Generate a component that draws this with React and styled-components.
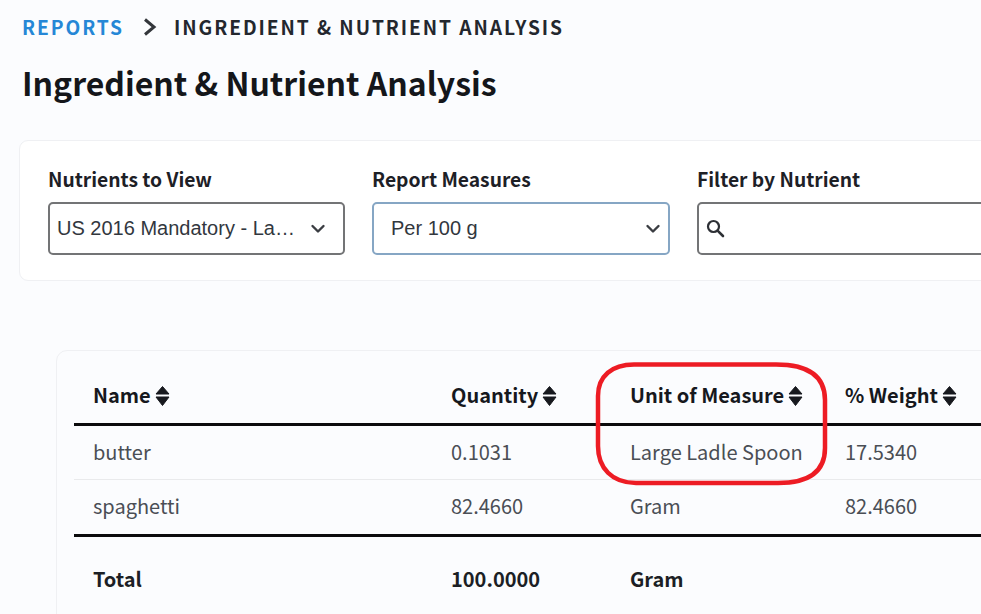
import React from 'react'
import styled, { createGlobalStyle } from 'styled-components'

const Global = createGlobalStyle`
  html, body {
    margin: 0;
    height: 100%;
    overflow: hidden;
    background: #fbfcfe;
  }
  body {
    font-family: "Noto Sans CJK SC", "Noto Sans", sans-serif;
    color: #16181d;
  }
`

const Page = styled.div`
  position: relative;
  width: 981px;
  height: 614px;
  overflow: hidden;
  padding: 15px 0 0 22px;
  box-sizing: border-box;
`

const Crumbs = styled.nav`
  display: flex;
  align-items: center;
  height: 24px;
  font-size: 19.2px;
  font-weight: 700;
  letter-spacing: 1.92px;
  white-space: nowrap;
`

const CrumbLink = styled.span`
  color: #2587d6;
`

const CrumbCurrent = styled.span`
  color: #23272e;
`

const Chevron = styled.svg`
  width: 14px;
  height: 18px;
  margin: 0 17px 0 19px;
`

const Title = styled.h1`
  margin: 21px 0 0;
  font-size: 32px;
  line-height: 44px;
  font-weight: 700;
  color: #14161a;
  white-space: nowrap;
`

const FilterCard = styled.section`
  display: flex;
  gap: 27px;
  width: 1100px;
  height: 141px;
  box-sizing: border-box;
  margin: 36px 0 0 -3px;
  padding: 25px 28px;
  background: #fff;
  border: 1.5px solid #eff0f3;
  border-radius: 9px;
`

const Field = styled.div`
  display: flex;
  flex-direction: column;
  gap: 10px;
  width: ${p => p.$width}px;
  flex: none;
`

const Label = styled.label`
  font-size: 19.25px;
  line-height: 26px;
  font-weight: 700;
  color: #1d2026;
  white-space: nowrap;
`

const Control = styled.div`
  display: flex;
  align-items: center;
  gap: 13px;
  height: 53px;
  box-sizing: border-box;
  padding: 0 ${p => p.$padRight || 17}px 0 ${p => p.$pad}px;
  background: #fff;
  border: ${p => (p.$focus ? '2px solid #86a6c4' : '2px solid #737476')};
  border-radius: 5px;
  font-family: "Liberation Sans", Arial, sans-serif;
  font-size: 20px;
  color: #32373e;
`

const ControlText = styled.span`
  flex: 1;
  min-width: 0;
  overflow: hidden;
  text-overflow: ellipsis;
  white-space: nowrap;
`

const Caret = styled.svg`
  width: 16px;
  height: 10px;
  flex: none;
`

const SearchIcon = styled.svg`
  width: 20px;
  height: 20px;
  flex: none;
  margin-top: -2px;
`

const TableCard = styled.section`
  width: 1100px;
  height: 320px;
  box-sizing: border-box;
  margin: 69px 0 0 34px;
  padding: 18px 17px 0;
  border: 1.5px solid #eff0f3;
  border-radius: 11px;
`

const Table = styled.table`
  width: 1060px;
  table-layout: fixed;
  border-collapse: collapse;
  font-size: 20px;
`

const Head = styled.th`
  height: 55px;
  padding: 0 0 2px 19px;
  box-sizing: border-box;
  text-align: left;
  font-weight: 700;
  color: #16181d;
  border-bottom: 3px solid #0b0b0c;
  white-space: nowrap;
`

const SortIcon = styled.svg`
  width: 15px;
  height: 20px;
  margin-left: 4px;
  vertical-align: -3px;
`

const Cell = styled.td`
  height: ${p => p.$height}px;
  padding: 0 0 2px 19px;
  box-sizing: border-box;
  color: #4a4e55;
  white-space: nowrap;
  border-bottom: ${p => (p.$last ? '3px solid #0b0b0c' : '1.5px solid #e9eaec')};
`

const TotalCell = styled.td`
  height: 84px;
  padding: 0 0 4px 19px;
  font-weight: 700;
  color: #1c1f25;
  white-space: nowrap;
`

const Callout = styled.svg`
  position: absolute;
  left: 590px;
  top: 356px;
  width: 244px;
  height: 134px;
  pointer-events: none;
`

const Sort = () => (
  <SortIcon viewBox="0 0 15 20">
    <path d="M7.5 0.5 L14 8 H1 Z M1 11 H14 L7.5 19.5 Z" fill="#17191e" strokeLinejoin="round" stroke="#17191e" />
  </SortIcon>
)

const Down = () => (
  <Caret viewBox="0 0 16 10">
    <path d="M2.5 2 L8 7.5 L13.5 2" fill="none" stroke="#3a3d42" strokeWidth="2.4" strokeLinecap="round" strokeLinejoin="round" />
  </Caret>
)

const rows = [
  { name: 'butter', qty: '0.1031', unit: 'Large Ladle Spoon', weight: '17.5340', height: 55 },
  { name: 'spaghetti', qty: '82.4660', unit: 'Gram', weight: '82.4660', height: 56, last: true }
]

const columns = ['Name', 'Quantity', 'Unit of Measure', '% Weight']

export default function App () {
  return (
    <Page>
      <Global />
      <Crumbs>
        <CrumbLink>REPORTS</CrumbLink>
        <Chevron viewBox="0 0 14 18">
          <path d="M2 1.5 L11 9 L2 16.5" fill="none" stroke="#33363b" strokeWidth="3" />
        </Chevron>
        <CrumbCurrent>INGREDIENT &amp; NUTRIENT ANALYSIS</CrumbCurrent>
      </Crumbs>
      <Title>Ingredient &amp; Nutrient Analysis</Title>

      <FilterCard>
        <Field $width={297}>
          <Label>Nutrients to View</Label>
          <Control $pad={7}>
            <ControlText>US 2016 Mandatory - Label Nutrients</ControlText>
            <Down />
          </Control>
        </Field>
        <Field $width={298}>
          <Label>Report Measures</Label>
          <Control $pad={17} $padRight={7} $focus>
            <ControlText>Per 100 g</ControlText>
            <Down />
          </Control>
        </Field>
        <Field $width={360}>
          <Label>Filter by Nutrient</Label>
          <Control $pad={6}>
            <SearchIcon viewBox="0 0 20 20">
              <circle cx="8.5" cy="8.5" r="5.5" fill="none" stroke="#2d3035" strokeWidth="2.2" />
              <path d="M12.8 12.8 L18 18" stroke="#2d3035" strokeWidth="2.6" strokeLinecap="round" />
            </SearchIcon>
          </Control>
        </Field>
      </FilterCard>

      <TableCard>
        <Table>
          <colgroup>
            <col style={{ width: 358 }} />
            <col style={{ width: 179 }} />
            <col style={{ width: 215 }} />
            <col />
          </colgroup>
          <thead>
            <tr>
              {columns.map(c => (
                <Head key={c}>{c}<Sort /></Head>
              ))}
            </tr>
          </thead>
          <tbody>
            {rows.map(r => (
              <tr key={r.name}>
                <Cell $height={r.height} $last={r.last}>{r.name}</Cell>
                <Cell $height={r.height} $last={r.last}>{r.qty}</Cell>
                <Cell $height={r.height} $last={r.last}>{r.unit}</Cell>
                <Cell $height={r.height} $last={r.last}>{r.weight}</Cell>
              </tr>
            ))}
            <tr>
              <TotalCell>Total</TotalCell>
              <TotalCell>100.0000</TotalCell>
              <TotalCell>Gram</TotalCell>
              <TotalCell />
            </tr>
          </tbody>
        </Table>
      </TableCard>

      <Callout viewBox="0 0 244 134">
        <path
          d="M44 8.5 H186 C218 8.5 235 20 235 44 V92 C235 116 218 127 188 127 H46 C22 127 8 112 8 90 V40 C8 20 22 8.5 44 8.5 Z"
          fill="none"
          stroke="#ed1c24"
          strokeWidth="4.5"
        />
      </Callout>
    </Page>
  )
}
